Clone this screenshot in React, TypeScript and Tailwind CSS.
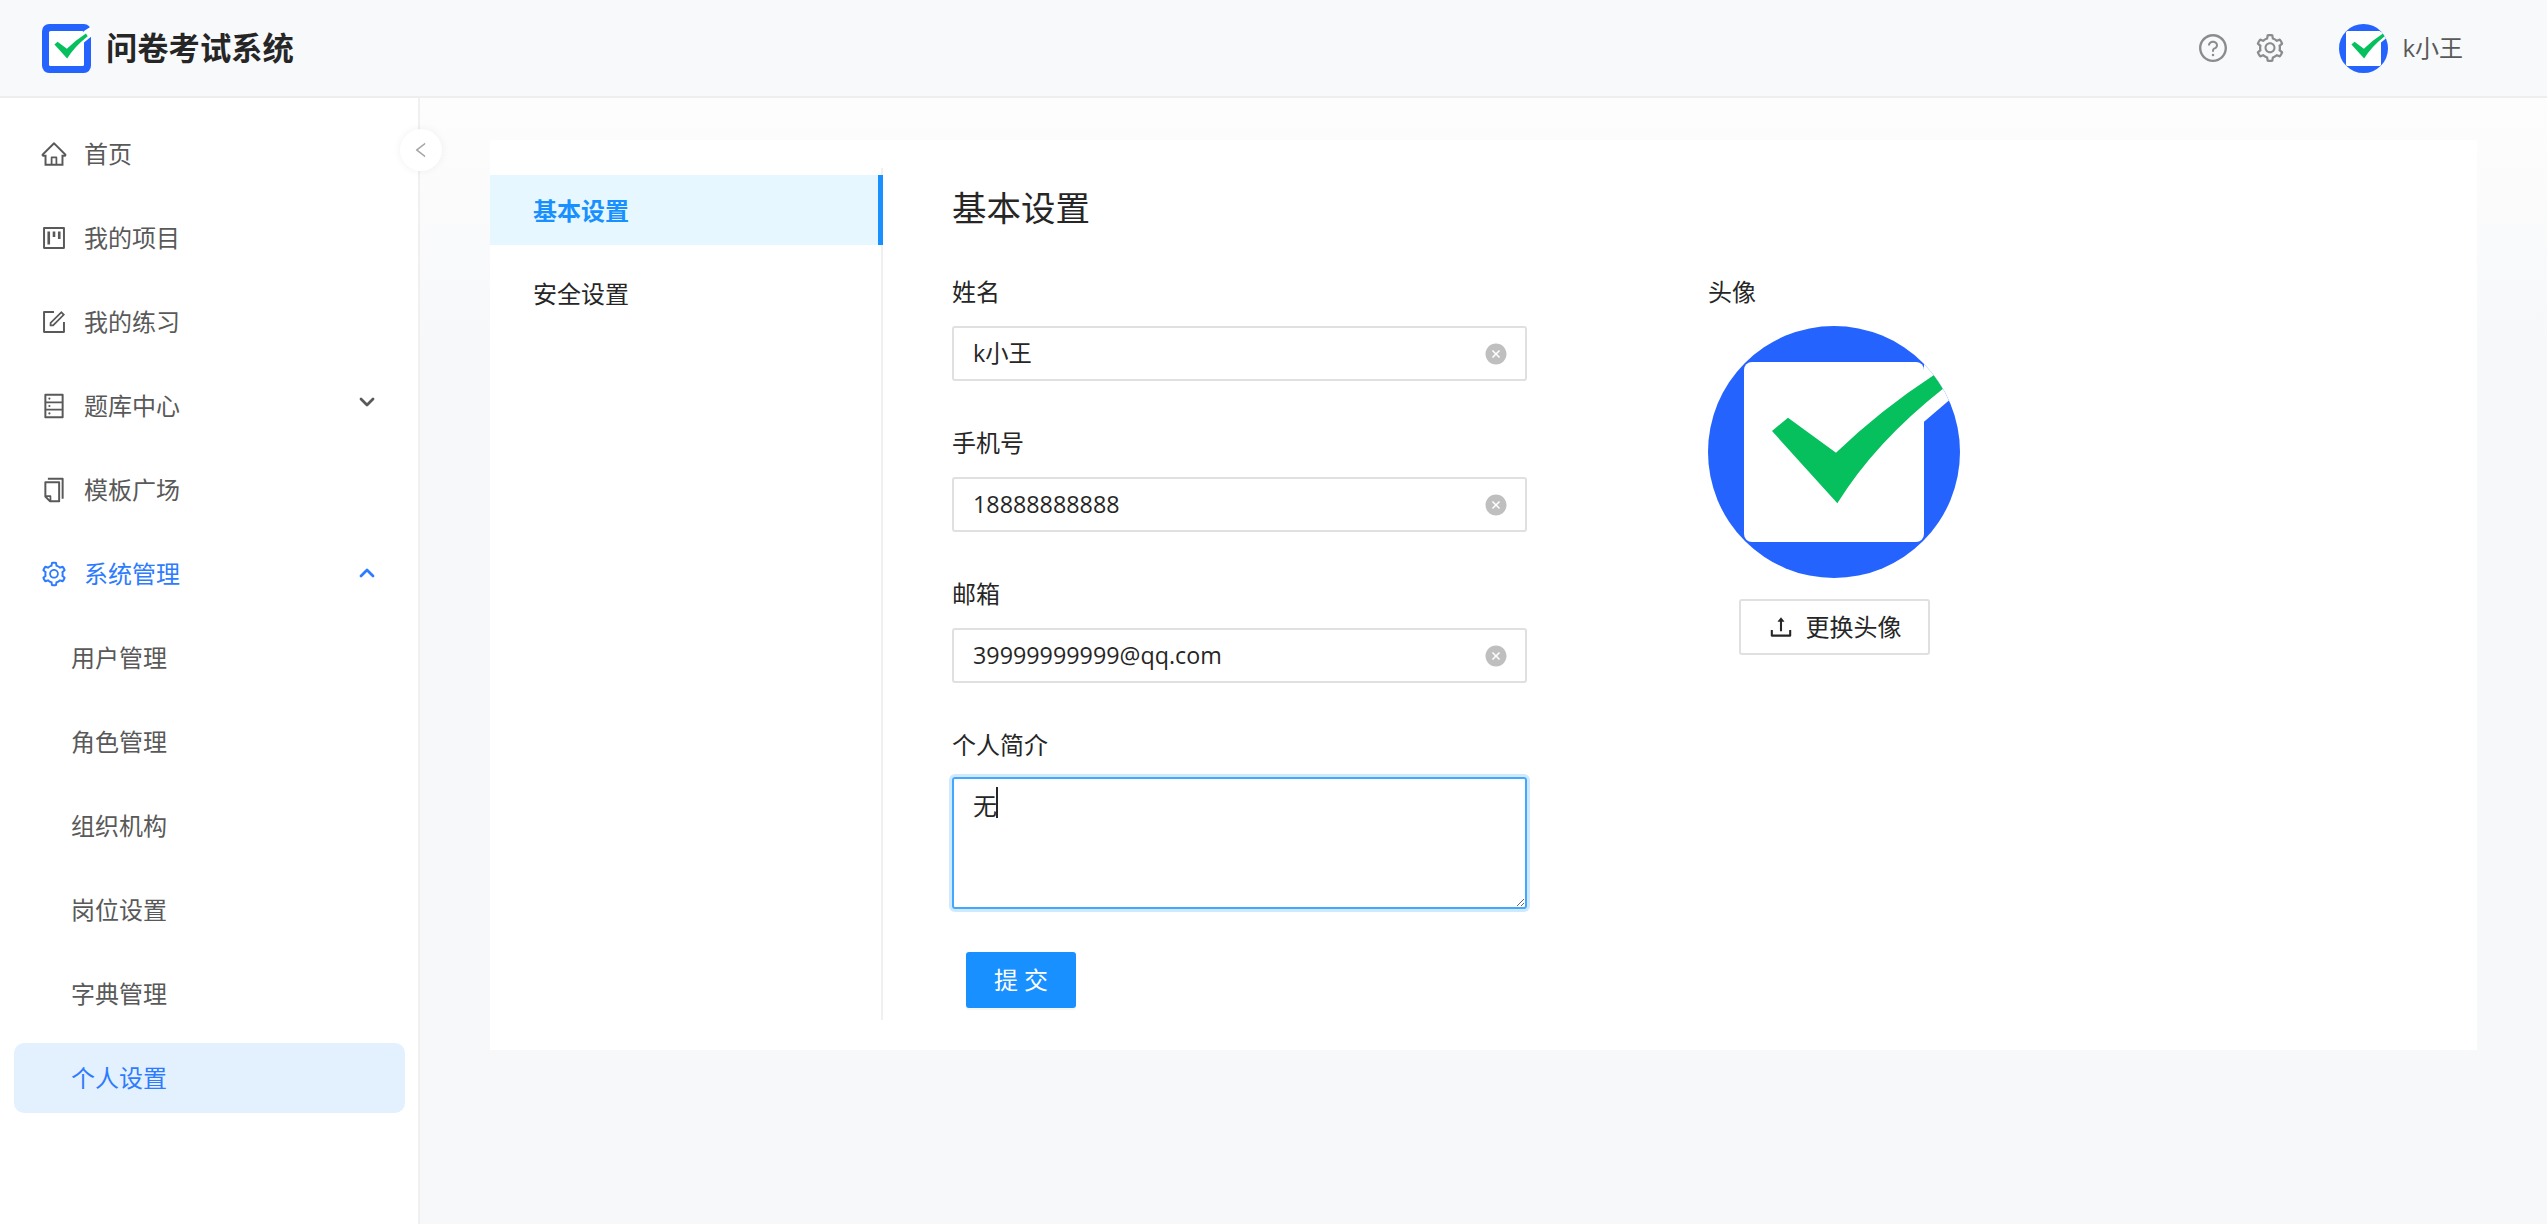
import React from "react";
import {
  AiOutlineHome,
  AiOutlineProject,
  AiOutlineForm,
  AiOutlineDatabase,
  AiOutlineCopy,
  AiOutlineSetting,
  AiOutlineQuestionCircle,
  AiOutlineUpload,
  AiOutlineLeft,
  AiFillCloseCircle,
} from "react-icons/ai";
import { ChevronDown, ChevronUp } from "lucide-react";

// logo is the same drawing everywhere, square in the header and clipped round as avatar
const Logo: React.FC<{ className?: string; rx?: number }> = ({ className, rx = 0 }) => (
  <svg viewBox="0 0 756 756" className={className}>
    <rect width="756" height="756" rx={rx} fill="#2563ff" />
    <rect x="108" y="108" width="540" height="540" rx="24" fill="#fff" />
    <polygon points="648,108 756,40 756,195 648,287" fill="#fff" />
    <path d="M192 315 L240 275 L384 380 Q520 250 678 147 L705 188 Q500 350 388 532 Z" fill="#05c05c" />
  </svg>
);

const NavItem: React.FC<{
  icon?: React.ReactNode;
  label: string;
  active?: boolean;
  selected?: boolean;
  arrow?: "up" | "down";
}> = ({ icon, label, active, selected, arrow }) => (
  <div
    className={`relative mx-[14px] flex h-[70px] w-[391px] items-center rounded-[10px] text-[24px] ${
      icon ? "pl-[26px]" : "pl-[57px]"
    } ${active || selected ? "text-[#2d7bff]" : "text-[#595959]"} ${selected ? "bg-[#e3f1ff]" : ""}`}
  >
    {icon && <span className="mr-[16px] flex w-[28px] justify-center text-[28px]">{icon}</span>}
    <span>{label}</span>
    {arrow === "down" && <ChevronDown className="absolute right-[26px] top-[19px] h-[24px] w-[24px]" strokeWidth={2.8} />}
    {arrow === "up" && <ChevronUp className="absolute right-[26px] top-[22px] h-[24px] w-[24px]" strokeWidth={2.8} />}
  </div>
);

const Field: React.FC<{ label: string; value: string }> = ({ label, value }) => (
  <div className="mb-[46px]">
    <div className="mb-[18px] h-[32px] text-[24px] leading-[32px] text-[#262626]">{label}</div>
    <div className="flex h-[55px] items-center rounded-[3px] border-2 border-[#e0e0e0] pl-[19px] pr-[17px]">
      <input
        readOnly
        value={value}
        className="min-w-0 flex-1 bg-transparent text-[23.3px] text-[#262626] outline-none"
      />
      <AiFillCloseCircle className="h-[24px] w-[24px] text-[#bfbfbf]" />
    </div>
  </div>
);

export default function App() {
  return (
    <div className="flex h-screen w-full flex-col overflow-hidden bg-white font-['Open_Sans','Noto_Sans_CJK_SC',sans-serif]">
      <header className="flex h-[98px] shrink-0 items-center border-b-2 border-[#eeeeee] bg-[#f8f9fb] pl-[42px]">
        <Logo className="h-[49px] w-[49px]" rx={110} />
        <span className="ml-[15px] text-[31.3px] font-bold text-[#262626]">问卷考试系统</span>
        <div className="ml-auto flex items-center pr-[84px] text-[#8c8c8c]">
          <AiOutlineQuestionCircle className="h-[32px] w-[32px]" />
          <AiOutlineSetting className="ml-[25px] h-[32px] w-[32px]" />
          <span className="ml-[53px] h-[49px] w-[49px] overflow-hidden rounded-full">
            <Logo className="h-full w-full" />
          </span>
          <span className="ml-[14px] text-[24px] text-[#595959]">k小王</span>
        </div>
      </header>

      <div className="flex min-h-0 flex-1">
        <aside className="relative flex w-[420px] shrink-0 flex-col gap-[14px] border-r-2 border-[#f0f0f0] bg-white pt-[21px]">
          <NavItem icon={<AiOutlineHome />} label="首页" />
          <NavItem icon={<AiOutlineProject />} label="我的项目" />
          <NavItem icon={<AiOutlineForm />} label="我的练习" />
          <NavItem icon={<AiOutlineDatabase />} label="题库中心" arrow="down" />
          <NavItem icon={<AiOutlineCopy />} label="模板广场" />
          <NavItem icon={<AiOutlineSetting />} label="系统管理" active arrow="up" />
          <NavItem label="用户管理" />
          <NavItem label="角色管理" />
          <NavItem label="组织机构" />
          <NavItem label="岗位设置" />
          <NavItem label="字典管理" />
          <NavItem label="个人设置" selected />
          <button className="absolute right-[-24px] top-[31px] flex h-[42px] w-[42px] items-center justify-center rounded-full bg-white text-[#a6a6a6] shadow-[0_0_8px_rgba(0,0,0,0.06)]">
            <AiOutlineLeft className="h-[20px] w-[20px]" />
          </button>
        </aside>

        <main className="flex-1 bg-gradient-to-b from-[#fdfdfd] to-[#f7f8fa] to-[22%] px-[70px] pt-[42px]">
          <div className="flex h-[910px] bg-white pb-[30px] pt-[28px]">
            <div className="w-[393px] shrink-0 border-r-2 border-[#f0f0f0] pt-[7px] text-[24px]">
              <div className="-mr-[2px] flex h-[70px] items-center border-r-[5px] border-[#1890ff] bg-[#e6f7ff] pl-[43px] pt-[1px] font-bold text-[#1890ff]">
                基本设置
              </div>
              <div className="mt-[14px] flex h-[70px] items-center pl-[43px] text-[#262626]">安全设置</div>
            </div>

            <div className="pl-[69px]">
              <h2 className="mt-[17px] h-[46px] text-[34.5px] font-normal leading-[46px] text-[#262626]">基本设置</h2>
              <div className="mt-[45px] flex">
                <div className="w-[575px]">
                  <Field label="姓名" value="k小王" />
                  <Field label="手机号" value="18888888888" />
                  <Field label="邮箱" value="39999999999@qq.com" />
                  <div className="mb-[16px] h-[32px] text-[24px] leading-[32px] text-[#262626]">个人简介</div>
                  <div className="relative h-[132px]">
                    <textarea
                      readOnly
                      value="无"
                      className="block h-full w-full rounded-[3px] border-2 border-[#40a9ff] px-[19px] py-[9px] text-[24px] text-[#262626] shadow-[0_0_0_3px_rgba(24,144,255,0.2)] outline-none"
                    />
                    <span className="absolute left-[44px] top-[10px] h-[31px] w-[2px] bg-[#262626]" />
                  </div>
                  <button className="ml-[14px] mt-[43px] h-[56px] w-[110px] rounded-[3px] bg-[#1890ff] pl-[6px] text-[24px] tracking-[6px] text-white shadow-[0_2px_0_rgba(0,0,0,0.04)]">
                    提交
                  </button>
                </div>

                <div className="ml-[181px] w-[252px]">
                  <div className="mb-[18px] h-[32px] text-[24px] leading-[32px] text-[#262626]">头像</div>
                  <div className="h-[252px] w-[252px] overflow-hidden rounded-full">
                    <Logo className="h-full w-full" />
                  </div>
                  <button className="mx-auto mt-[21px] flex h-[56px] w-[191px] items-center justify-center rounded-[3px] border-2 border-[#e0e0e0] text-[24px] text-[#262626]">
                    <AiOutlineUpload className="mr-[11px] h-[28px] w-[28px]" />
                    更换头像
                  </button>
                </div>
              </div>
            </div>
          </div>
        </main>
      </div>
    </div>
  );
}
